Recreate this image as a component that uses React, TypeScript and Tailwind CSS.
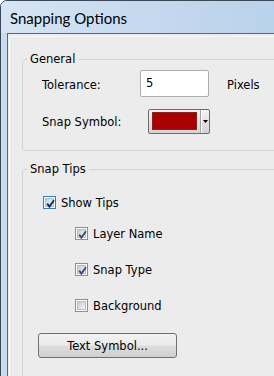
import React from "react";

type BoxKind = "focus" | "checked" | "empty";

const CheckBox = ({ kind }: { kind: BoxKind }) => {
    const outer = kind === "focus" ? "border-[#3c7fb1]" : "border-[#8e8f8f]";
    const inner =
        kind === "focus"
            ? "bg-[linear-gradient(135deg,#bcd9ee_0%,#e9f4fb_100%)] border-[#9ec4e0]"
            : "bg-[linear-gradient(135deg,#c9cbce_0%,#f4f4f4_100%)] border-[#b9bcbf]";
    const tick = kind === "focus" ? "#15286b" : "#3b4b80";
    return (
        <span className={`relative flex w-[13px] h-[13px] shrink-0 border ${outer} bg-white p-[1px]`}>
            <span className={`flex-1 border ${inner}`} />
            {kind !== "empty" && (
                <svg className="absolute left-0 top-0" width="13" height="13" viewBox="0 0 13 13">
                    <path d="M3.2 6.6 L5.4 9.6 L10 3.2" stroke={tick} strokeWidth="1.9" fill="none" strokeLinejoin="miter" />
                </svg>
            )}
        </span>
    );
};

const Row = ({ kind, label, className }: { kind: BoxKind; label: string; className: string }) => (
    <div className={`flex items-center h-[13px] ${className}`}>
        <CheckBox kind={kind} />
        <span className="ml-[5px] leading-[14px]">{label}</span>
    </div>
);

const App = () => {
    return (
        <div className="w-[274px] h-[376px] overflow-hidden bg-white">
            <div className="flex flex-col w-[300px] h-[420px] border border-[#3a4858] rounded-tl-[7px] bg-[linear-gradient(90deg,#c9dcf1_0%,#b9d1ea_100%)]">
                {/* title bar */}
                <div className="h-[32px] shrink-0 pl-[9px] pt-[8px] rounded-tl-[6px] bg-[linear-gradient(90deg,#d6e5f5_0%,#c6daef_45%,#b8d0ea_100%)]">
                    <span className="block text-[15px] leading-[18px] text-black font-['Lato',sans-serif]">Snapping Options</span>
                </div>

                {/* client area */}
                <div className="flex-1 ml-[6px] border-l border-t border-[#56687c] bg-[#ececec]">
                    <div className="mt-[2px] ml-[1px] h-full border-l border-t border-[#f8f8f8] text-[11.5px] text-black font-['DejaVu_Sans',sans-serif]">
                        <fieldset className="ml-[12px] mt-[14px] border border-[#d0d7dc] rounded-[3px] pb-[16px]">
                            <legend className="ml-[4px] px-[3px] leading-[16px]">General</legend>
                            <div className="pl-[19px]">
                                <div className="flex items-start mt-[3px] h-[27px]">
                                    <span className="w-[98px] pt-[8px] leading-[14px]">Tolerance:</span>
                                    <div className="w-[69px] h-[27px] border border-[#abadb3] rounded-[2px] bg-white px-[5px] pt-[5px] leading-[14px]">5</div>
                                    <span className="ml-[18px] pt-[8px] leading-[14px]">Pixels</span>
                                </div>
                                <div className="flex items-start mt-[12px] h-[25px]">
                                    <span className="w-[106px] pt-[6px] leading-[14px]">Snap Symbol:</span>
                                    <div className="flex w-[62px] h-[25px] border border-[#6c6c6c] rounded-[2px] bg-[linear-gradient(180deg,#f4f4f4_0%,#e2e2e2_50%,#d3d3d3_100%)]">
                                        <div className="pl-[3px] pt-[2px]">
                                            <div className="w-[45px] h-[18px] border border-[#8a2020] bg-[#aa0000]" />
                                        </div>
                                        <div className="ml-[3px] flex-1 flex items-center justify-center border-l border-[#a3a3a3] shadow-[inset_1px_0_0_#ffffff]">
                                            <svg width="5" height="3" viewBox="0 0 5 3">
                                                <polygon points="0,0 5,0 2.5,3" fill="#000" />
                                            </svg>
                                        </div>
                                    </div>
                                </div>
                            </div>
                        </fieldset>

                        <fieldset className="ml-[12px] mt-[10px] h-[260px] border border-[#d0d7dc] rounded-[3px]">
                            <legend className="ml-[4px] px-[3px] leading-[16px]">Snap Tips</legend>
                            <Row kind="focus" label="Show Tips" className="mt-[19px] pl-[20px]" />
                            <Row kind="checked" label="Layer Name" className="mt-[18px] pl-[52px]" />
                            <Row kind="checked" label="Snap Type" className="mt-[23px] pl-[52px]" />
                            <Row kind="empty" label="Background" className="mt-[23px] pl-[52px]" />
                            <button className="mt-[21px] ml-[15px] w-[139px] h-[25px] border border-[#707070] rounded-[3px] bg-[linear-gradient(180deg,#f2f2f2_0%,#ebebeb_48%,#dddddd_52%,#cfcfcf_100%)] leading-[14px] text-black">
                                Text Symbol...
                            </button>
                        </fieldset>
                    </div>
                </div>
            </div>
        </div>
    );
};

export default App;
